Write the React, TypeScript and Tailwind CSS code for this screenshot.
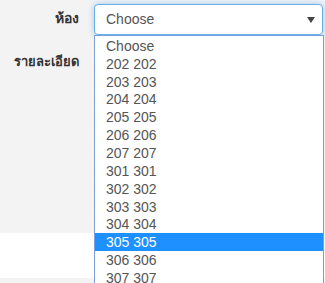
const ROOMS = [
  "Choose",
  "202 202",
  "203 203",
  "204 204",
  "205 205",
  "206 206",
  "207 207",
  "301 301",
  "302 302",
  "303 303",
  "304 304",
  "305 305",
  "306 306",
  "307 307",
];

export default function App() {
  const selected = "305 305";
  return (
    <div
      className="relative w-[325px] h-[283px] overflow-hidden bg-[#f3f3f3]"
      style={{ fontFamily: '"Liberation Sans", Arial, sans-serif' }}
    >
      <div className="h-[233px] bg-[#f3f3f3] pt-[4px]">
        <div className="flex items-start">
          <label className="w-[79px] text-right text-[14px] font-bold text-[#333] pt-[4px] leading-[20px]">
            ห้อง
          </label>
          <div className="ml-[15px] w-[229px] h-[31px] flex items-center justify-between rounded-[4px] border border-[#66afe9] bg-white pl-[11px] pr-[7px] shadow-[0_0_6px_rgba(102,175,233,0.6)]">
            <span className="text-[14px] text-[#555]">Choose</span>
            <svg width="8" height="6" viewBox="0 0 8 6">
              <path d="M0 0 L8 0 L4 6 Z" fill="#444" />
            </svg>
          </div>
        </div>
        <div className="flex items-start mt-[17px]">
          <label className="w-[79px] text-right text-[13px] font-bold text-[#333] leading-[20px]">
            รายละเอียด
          </label>
        </div>
      </div>
      <div className="h-[45px] bg-white" />

      <ul className="absolute left-[94px] top-[35px] w-[230px] border border-[#7a9fdb] bg-white pt-[1px]">
        {ROOMS.map((r) => (
          <li
            key={r}
            className={
              r === selected
                ? "h-[17.85px] flex items-center pl-[11px] text-[14px] leading-none bg-[#1e90ff] text-white"
                : "h-[17.85px] flex items-center pl-[11px] text-[14px] leading-none text-[#555]"
            }
          >
            {r}
          </li>
        ))}
      </ul>
    </div>
  );
}
